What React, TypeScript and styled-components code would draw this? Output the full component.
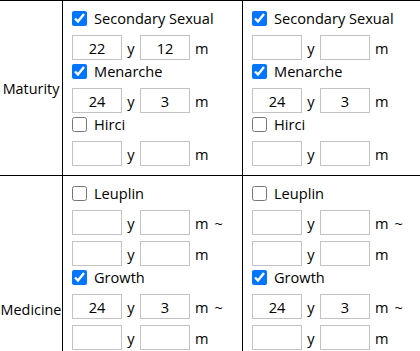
import React from "react";
import styled, { createGlobalStyle } from "styled-components";

const GlobalStyle = createGlobalStyle`
  html, body {
    margin: 0;
    padding: 0;
    overflow: hidden;
    background: #ffffff;
  }
  body {
    font-family: "Open Sans", "Noto Sans", sans-serif;
    font-size: 14.6px;
    color: #000000;
  }
`;

const Table = styled.div`
  display: grid;
  grid-template-columns: 63px 180px 180px;
  border-top: 1px solid #000000;
  width: max-content;
`;

const HeadCell = styled.div`
  display: flex;
  align-items: center;
  justify-content: center;
  border-right: 1px solid #000000;
  border-bottom: 1px solid #000000;
  white-space: nowrap;
  font-size: 14.4px;
`;

const Cell = styled.div`
  display: flex;
  flex-direction: column;
  padding: 6px 0 9px 9px;
  border-right: 1px solid #000000;
  border-bottom: 1px solid #000000;
`;

const CheckRow = styled.label`
  display: flex;
  align-items: center;
  height: 22px;
  gap: 7px;
  white-space: nowrap;
`;

const Check = styled.input`
  width: 15px;
  height: 15px;
  margin: 0;
`;

const InputRow = styled.div`
  display: flex;
  align-items: center;
  height: 25px;
  margin-top: 6px;
  white-space: nowrap;
`;

const NumInput = styled.input`
  box-sizing: border-box;
  width: 50px;
  height: 25px;
  padding: 0;
  margin: 0;
  border: 1px solid #c3c3c3;
  border-radius: 0;
  background: #ffffff;
  font-family: inherit;
  font-size: 14.6px;
  color: #000000;
  text-align: center;
  outline: none;
`;

const Unit = styled.span<{ $wide?: boolean }>`
  display: inline-block;
  width: ${(p) => (p.$wide ? "auto" : "18px")};
  margin-left: ${(p) => (p.$wide ? "5px" : "0")};
  text-align: center;
`;

const Tilde = styled.span`
  margin-left: 6px;
`;

type Range = { y: string; m: string; tilde?: boolean };
type Group = { label: string; checked: boolean; ranges: Range[] };

const maturityA: Group[] = [
  { label: "Secondary Sexual", checked: true, ranges: [{ y: "22", m: "12" }] },
  { label: "Menarche", checked: true, ranges: [{ y: "24", m: "3" }] },
  { label: "Hirci", checked: false, ranges: [{ y: "", m: "" }] },
];
const maturityB: Group[] = [
  { label: "Secondary Sexual", checked: true, ranges: [{ y: "", m: "" }] },
  { label: "Menarche", checked: true, ranges: [{ y: "24", m: "3" }] },
  { label: "Hirci", checked: false, ranges: [{ y: "", m: "" }] },
];
const medicine: Group[] = [
  {
    label: "Leuplin",
    checked: false,
    ranges: [
      { y: "", m: "", tilde: true },
      { y: "", m: "" },
    ],
  },
  {
    label: "Growth",
    checked: true,
    ranges: [
      { y: "24", m: "3", tilde: true },
      { y: "", m: "" },
    ],
  },
  {
    label: "Estrogen",
    checked: false,
    ranges: [
      { y: "", m: "", tilde: true },
      { y: "", m: "" },
    ],
  },
];

function GroupCell({ groups }: { groups: Group[] }) {
  return (
    <Cell>
      {groups.map((g) => (
        <React.Fragment key={g.label}>
          <CheckRow>
            <Check type="checkbox" defaultChecked={g.checked} />
            <span>{g.label}</span>
          </CheckRow>
          {g.ranges.map((r, i) => (
            <InputRow key={i}>
              <NumInput type="text" defaultValue={r.y} />
              <Unit>y</Unit>
              <NumInput type="text" defaultValue={r.m} />
              <Unit $wide>m</Unit>
              {r.tilde && <Tilde>~</Tilde>}
            </InputRow>
          ))}
        </React.Fragment>
      ))}
    </Cell>
  );
}

export default function App() {
  return (
    <>
      <GlobalStyle />
      <Table>
        <HeadCell>Maturity</HeadCell>
        <GroupCell groups={maturityA} />
        <GroupCell groups={maturityB} />
        <HeadCell>Medicine</HeadCell>
        <GroupCell groups={medicine} />
        <GroupCell groups={medicine} />
      </Table>
    </>
  );
}
